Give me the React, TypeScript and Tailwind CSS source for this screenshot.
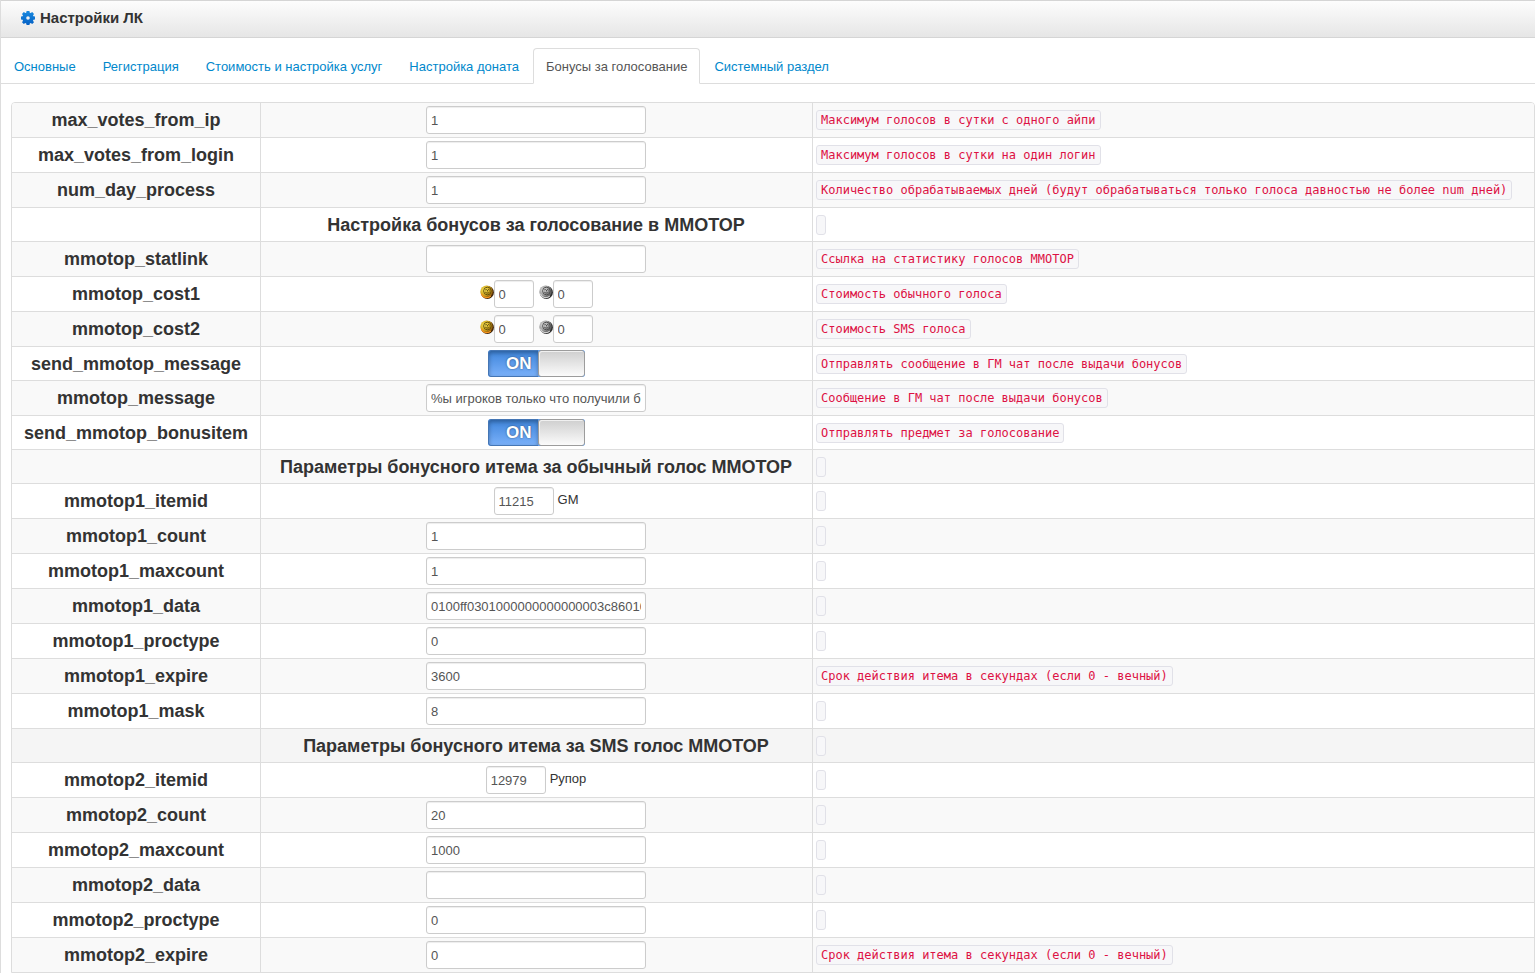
import { useState } from "react";

type Row =
  | { kind: "text"; name: string; value: string; hint?: string }
  | { kind: "title"; title: string; active?: boolean }
  | { kind: "cost"; name: string; hint: string }
  | { kind: "switch"; name: string; hint: string }
  | { kind: "item"; name: string; value: string; item: string };

const tabs = [
  "Основные",
  "Регистрация",
  "Стоимость и настройка услуг",
  "Настройка доната",
  "Бонусы за голосование",
  "Системный раздел",
];

const rows: Row[] = [
  { kind: "text", name: "max_votes_from_ip", value: "1", hint: "Максимум голосов в сутки с одного айпи" },
  { kind: "text", name: "max_votes_from_login", value: "1", hint: "Максимум голосов в сутки на один логин" },
  {
    kind: "text",
    name: "num_day_process",
    value: "1",
    hint: "Количество обрабатываемых дней (будут обрабатываться только голоса давностью не более num дней)",
  },
  { kind: "title", title: "Настройка бонусов за голосование в ММОТОР" },
  { kind: "text", name: "mmotop_statlink", value: "", hint: "Ссылка на статистику голосов ММОТОР" },
  { kind: "cost", name: "mmotop_cost1", hint: "Стоимость обычного голоса" },
  { kind: "cost", name: "mmotop_cost2", hint: "Стоимость SMS голоса" },
  { kind: "switch", name: "send_mmotop_message", hint: "Отправлять сообщение в ГМ чат после выдачи бонусов" },
  {
    kind: "text",
    name: "mmotop_message",
    value: "%ы игроков только что получили бонусы",
    hint: "Сообщение в ГМ чат после выдачи бонусов",
  },
  { kind: "switch", name: "send_mmotop_bonusitem", hint: "Отправлять предмет за голосование" },
  { kind: "title", title: "Параметры бонусного итема за обычный голос ММОТОР" },
  { kind: "item", name: "mmotop1_itemid", value: "11215", item: "GM" },
  { kind: "text", name: "mmotop1_count", value: "1" },
  { kind: "text", name: "mmotop1_maxcount", value: "1" },
  { kind: "text", name: "mmotop1_data", value: "0100ff0301000000000000003c86010000" },
  { kind: "text", name: "mmotop1_proctype", value: "0" },
  { kind: "text", name: "mmotop1_expire", value: "3600", hint: "Срок действия итема в секундах (если 0 - вечный)" },
  { kind: "text", name: "mmotop1_mask", value: "8" },
  { kind: "title", title: "Параметры бонусного итема за SMS голос ММОТОР", active: true },
  { kind: "item", name: "mmotop2_itemid", value: "12979", item: "Рупор" },
  { kind: "text", name: "mmotop2_count", value: "20" },
  { kind: "text", name: "mmotop2_maxcount", value: "1000" },
  { kind: "text", name: "mmotop2_data", value: "" },
  { kind: "text", name: "mmotop2_proctype", value: "0" },
  { kind: "text", name: "mmotop2_expire", value: "0", hint: "Срок действия итема в секундах (если 0 - вечный)" },
];

const inputClass =
  "block h-7 rounded-[3px] border border-[#ccc] bg-white px-1 text-[13px] text-[#555] shadow-[inset_0_1px_1px_rgba(0,0,0,0.075)] outline-none focus:border-[#52a8ec]";

function GearIcon() {
  return (
    <svg viewBox="0 0 14 14" className="size-[14px]" aria-hidden="true">
      <defs>
        <linearGradient id="gear" x1="0" y1="0" x2="0" y2="1">
          <stop offset="0" stopColor="#1a8ae0" />
          <stop offset="1" stopColor="#0560c4" />
        </linearGradient>
      </defs>
      <path
        fill="url(#gear)"
        fillRule="evenodd"
        d="M5.6 0h2.8l.4 1.7.9.4L11.2 1.1l1.8 1.8-1 1.5.4.9 1.6.3v2.8l-1.6.4-.4.9 1 1.5-1.8 1.8-1.5-1-.9.4L8.4 14H5.6l-.4-1.6-.9-.4-1.5 1L1 11.2l1-1.5-.4-.9L0 8.4V5.6l1.6-.3.4-.9-1-1.5 1.8-1.8 1.5 1 .9-.4zM7 5.2a1.8 1.8 0 1 0 0 3.6 1.8 1.8 0 0 0 0-3.6z"
      />
    </svg>
  );
}

function Coin({ gold = false }: { gold?: boolean }) {
  const id = gold ? "coin-gold" : "coin-silver";
  return (
    <svg viewBox="0 0 14 14" className="size-[14px]" aria-hidden="true">
      <defs>
        <radialGradient id={id} cx="0.35" cy="0.35" r="0.7">
          <stop offset="0" stopColor={gold ? "#fbe85a" : "#e2e2e2"} />
          <stop offset="0.6" stopColor={gold ? "#cfa51e" : "#9a9a9a"} />
          <stop offset="1" stopColor={gold ? "#7a4408" : "#444"} />
        </radialGradient>
      </defs>
      <circle cx="7.4" cy="7.4" r="6.5" fill={gold ? "#3d2408" : "#2a2a2a"} />
      <circle cx="6.6" cy="6.8" r="6.3" fill={`url(#${id})`} />
      <path d="M1.4 8.8a5.6 5.6 0 0 0 9.4 2" fill="none" stroke={gold ? "#f7941e" : "#d0d0d0"} strokeWidth="1.2" />
      <circle cx="7.4" cy="6" r="3.8" fill="none" stroke={gold ? "#5a4708" : "#444"} strokeWidth="0.9" />
      <path d="M5.2 5l1.5-.6M8.2 4.4l1.4.8M5.2 7c1.2 1.4 3.2 1.4 4.4 0M7.4 5v1.4" fill="none" stroke={gold ? "#4a3a06" : "#333"} strokeWidth="0.9" />
    </svg>
  );
}

function Switch({ id }: { id: string }) {
  const [on, setOn] = useState(true);

  return (
    <label className="relative mx-auto flex h-[27px] w-[97px] cursor-pointer overflow-hidden rounded-[3px] bg-[#5c9df0]">
      <input id={id} type="checkbox" checked={on} onChange={() => setOn(!on)} className="peer sr-only" />
      <span className="flex flex-1 items-center justify-end rounded-l-[3px] border border-r-0 border-[#4576b4] bg-linear-to-b from-[#3f86dc] to-[#79b0f9] pr-[6px] text-[17px] font-bold text-white shadow-[inset_0_2px_4px_rgba(0,0,0,0.3)] [text-shadow:0_0_2px_rgba(0,0,0,0.5)]">
        {on ? "ON" : "OFF"}
      </span>
      <span className="w-[47px] rounded-[3px] border border-[#9c9c9c] bg-linear-to-b from-[#cfcfcf] to-[#fbfbfb] shadow-[inset_1px_1px_0_#f0f0f0]" />
    </label>
  );
}

function Field({ row }: { row: Row }) {
  switch (row.kind) {
    case "title":
      return <h4 className="text-[18px] leading-5 font-bold">{row.title}</h4>;
    case "cost":
      return (
        <div className="flex justify-center gap-[5px]">
          <span className="flex items-center">
            <span className="pb-1">
              <Coin gold />
            </span>
            <input id={row.name} defaultValue="0" className={`${inputClass} w-10`} />
          </span>
          <span className="flex items-center">
            <span className="pb-1">
              <Coin />
            </span>
            <input aria-label={`${row.name} silver`} defaultValue="0" className={`${inputClass} w-10`} />
          </span>
        </div>
      );
    case "switch":
      return <Switch id={row.name} />;
    case "item":
      return (
        <div className="flex justify-center gap-1">
          <input id={row.name} defaultValue={row.value} className={`${inputClass} w-15`} />
          <span className="leading-[26px]">{row.item}</span>
        </div>
      );
    default:
      return <input id={row.name} type="text" defaultValue={row.value} className={`${inputClass} mx-auto w-55`} />;
  }
}

export default function App() {
  const [tab, setTab] = useState(4);

  return (
    <div className="min-h-screen border-l border-[#ddd] bg-white font-['Liberation_Sans',Arial,sans-serif] text-[13px] text-[#333]">
      <header className="flex h-[38px] items-center gap-[5px] border-y border-[#d5d5d5] bg-linear-to-b from-[#fdfdfd] to-[#e6e6e6] pb-[2px] pl-5">
        <GearIcon />
        <h1 className="text-[15px] font-bold">Настройки ЛК</h1>
      </header>

      <nav className="mt-[10px] flex gap-px border-b border-[#ddd]">
        {tabs.map((name, i) => (
          <a
            key={name}
            href="#"
            onClick={(e) => {
              e.preventDefault();
              setTab(i);
            }}
            className={`-mb-px rounded-t border px-3 pt-2 pb-1.5 leading-5 ${
              i === tab
                ? "border-[#ddd] border-b-white bg-white text-[#555]"
                : "border-transparent text-[#0088cc] hover:bg-[#eee]"
            }`}
          >
            {name}
          </a>
        ))}
      </nav>

      <main className="pt-[18px] pl-[10px]">
        <table className="w-full table-fixed border-separate border-spacing-0 overflow-hidden rounded-t border border-[#ddd]">
          <colgroup>
            <col className="w-[248px]" />
            <col className="w-[552px]" />
            <col />
          </colgroup>
          <tbody>
            {rows.map((row, i) => {
              const bg = row.kind === "title" && row.active ? "bg-[#f5f5f5]" : i % 2 === 0 ? "bg-[#f9f9f9]" : "bg-white";
              const line = i > 0 ? "border-t" : "";
              const height = row.kind === "title" ? "h-[34px]" : "";
              return (
                <tr key={i} className={`${bg} ${height}`}>
                  <th className={`border-[#ddd] p-0 text-center text-[18px] leading-5 font-bold ${line}`}>
                    {row.kind !== "title" && <label htmlFor={row.name}>{row.name}</label>}
                  </th>
                  <td className={`border-l border-[#ddd] py-[3px] pr-1 pl-[3px] text-center ${line}`}>
                    <Field row={row} />
                  </td>
                  <td className={`border-l border-[#ddd] p-[3px] ${line}`}>
                    <code className="block w-fit min-h-5 rounded-[3px] border border-[#e1e1e8] bg-[#f7f7f9] px-1 font-['DejaVu_Sans_Mono',monospace] text-[12px] leading-[18px] whitespace-nowrap text-[#dd1144]">
                      {"hint" in row ? row.hint : ""}
                    </code>
                  </td>
                </tr>
              );
            })}
          </tbody>
        </table>
      </main>
    </div>
  );
}
